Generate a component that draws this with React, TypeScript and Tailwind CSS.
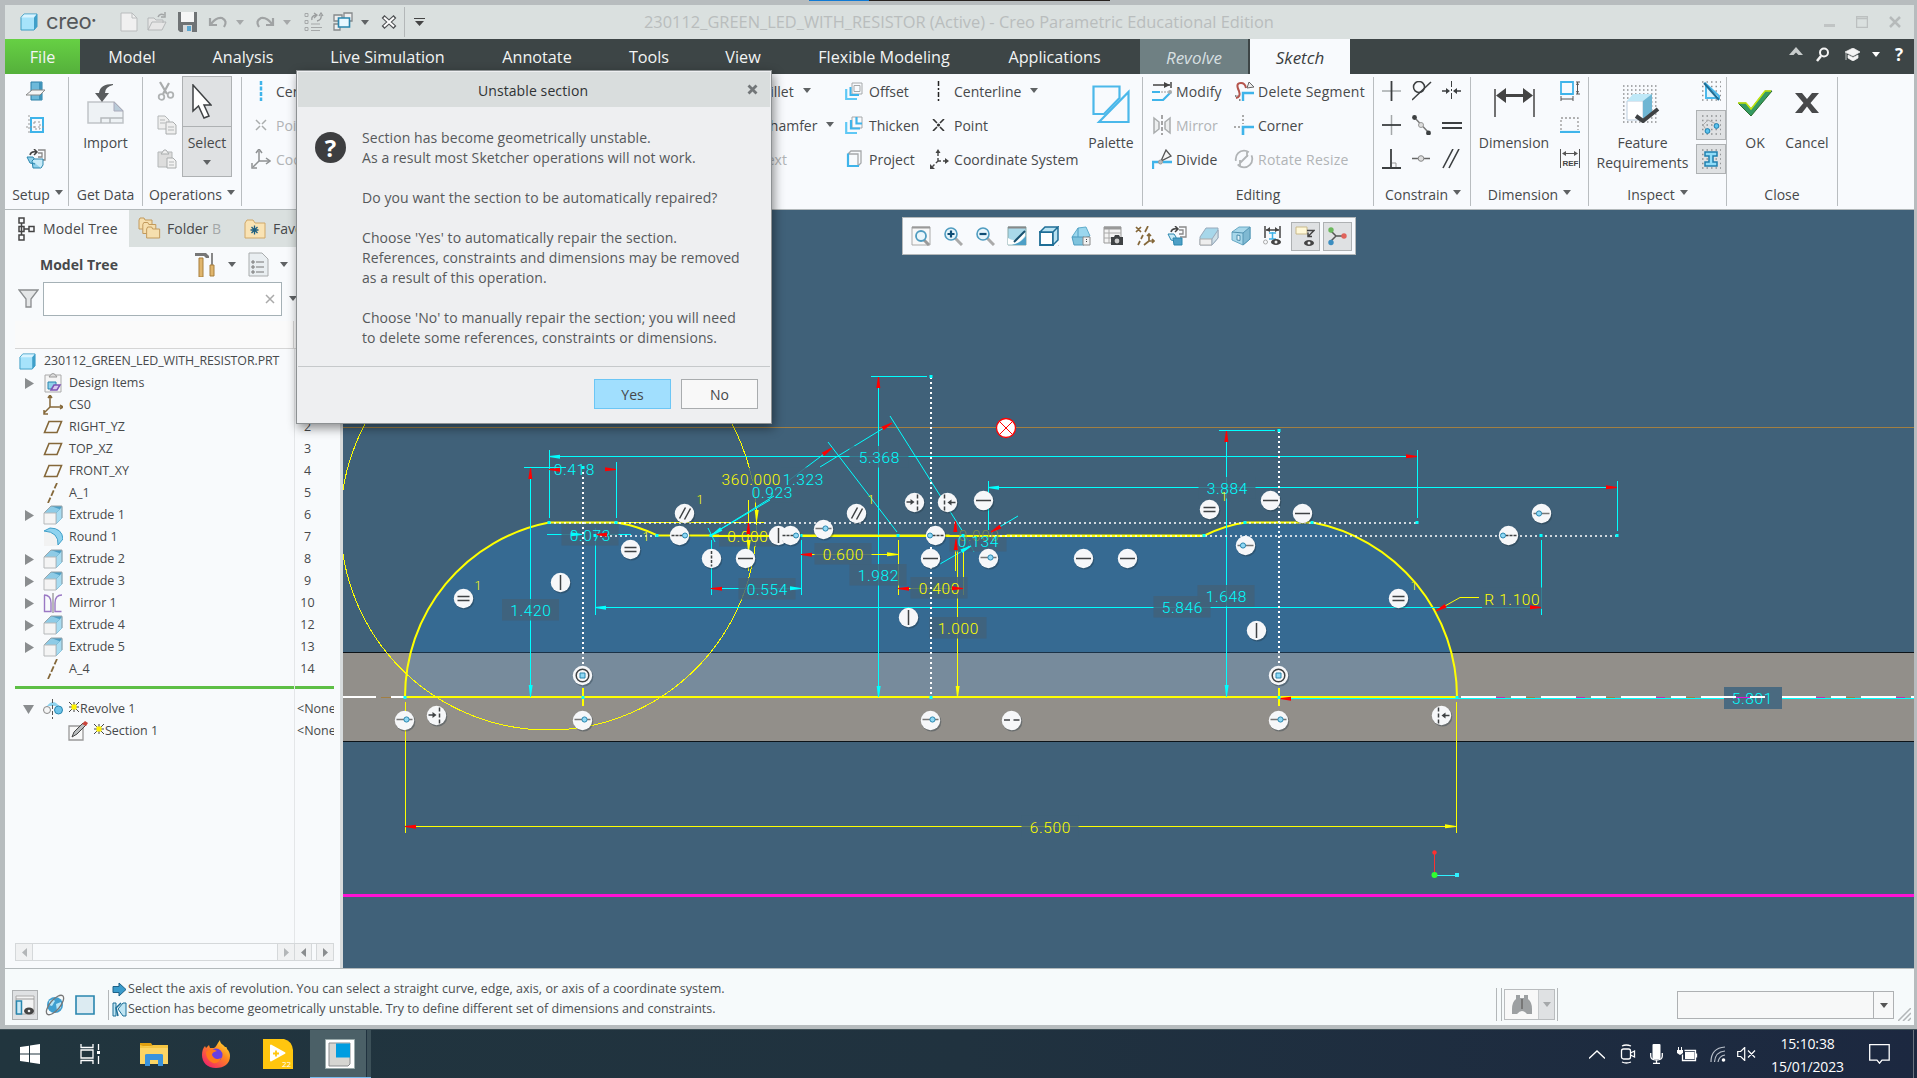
import React from "react";

type Kids = { children?: React.ReactNode };

/* ---------- shared helpers ---------- */

function Svg({ w, h, vb, className = "", children }: Kids & { w: number; h: number; vb?: string; className?: string }) {
  return (
    <svg width={w} height={h} viewBox={vb ?? `0 0 ${w} ${h}`} fill="none" className={`block shrink-0 ${className}`}>
      {children}
    </svg>
  );
}

function Caret({ color = "#5f6264", className = "" }: { color?: string; className?: string }) {
  return (
    <Svg w={8} h={5} className={className}>
      <path d="M0 0h8L4 5z" fill={color} />
    </Svg>
  );
}

function Cube({ s = 18 }: { s?: number }) {
  return (
    <Svg w={s} h={s} vb="0 0 18 18">
      <path d="M1 4.500L4 1h13v12.500L14 17H1z" fill="#a6e3fb" stroke="#3c9cc4" />
      <path d="M1.500 4.500L4 1.500h12.500L14 4.500z" fill="#d9f4ff" />
      <path d="M14 4.500L17 1v12.500L14 17z" fill="#3f9fc9" />
    </Svg>
  );
}

/* ---------- title bar ---------- */

function TitleBar() {
  return (
    <div className="flex h-[34px] items-center bg-[#dae0df]">
      <div className="flex w-[102px] items-center pl-[15px]">
        <Cube s={18} />
        <div className="ml-[8px] flex h-[24px] items-start text-[22px] leading-[22px] tracking-[-0.3px] text-[#55585a] [font-family:Inter,sans-serif]">
          creo<span className="text-[9px] leading-[20px]">•</span>
        </div>
      </div>
      <div className="flex w-[344px] items-center pl-[13px]">
        <Svg w={18} h={20}>
          <path d="M1 1h11l5 5v13H1z" fill="#f0f0f0" stroke="#b9bcbd" />
          <path d="M12 1v5h5" stroke="#b9bcbd" />
        </Svg>
        <Svg w={21} h={20} className="ml-[9px]">
          <path d="M1 18V6h6l2 2h7v3M1 18l4-8h14l-4 8z" fill="#e6e6e6" stroke="#b4b7b8" />
          <path d="M11 5q2-4 6-2M18 0v5h-4" stroke="#a2a5a6" strokeWidth="1.500" />
        </Svg>
        <Svg w={19} h={20} className="ml-[10px]">
          <path d="M0 0h19v20H2l-2-2z" fill="#6f7375" />
          <path d="M3 0h13v10H3z" fill="#f5f6f6" />
          <path d="M5 13h9v7H5z" fill="#d7dadb" />
          <path d="M9 14h4v5H9z" fill="#5ba7d0" />
        </Svg>
        <Svg w={20} h={16} className="ml-[11px]">
          <path d="M2 4v7h7M3 10Q8 3 14 4q6 3 2 9" stroke="#a0a3a4" strokeWidth="2.200" />
        </Svg>
        <Caret color="#a5a8a9" className="ml-[8px]" />
        <Svg w={20} h={16} className="ml-[11px]">
          <path d="M18 4v7h-7M17 10Q12 3 6 4q-6 3-2 9" stroke="#a0a3a4" strokeWidth="2.200" />
        </Svg>
        <Caret color="#a5a8a9" className="ml-[8px]" />
        <Svg w={20} h={20} className="ml-[13px]">
          <path d="M1 1.500h3v3H1zM1 8.500h3v3H1zM1 15.500h3v3H1zM7 12h9M7 15.500h11M7 18.500h9" stroke="#a5a8a9" />
          <path d="M8 8q-1-4 4-5M13 9q5-1 4-6M10 1l3 2-3 3M15 4l2-3 2 3" stroke="#9a9d9e" strokeWidth="1.300" />
        </Svg>
        <Svg w={20} h={20} className="ml-[9px]">
          <path d="M1 3h8v6H1zM11 1h8v8h-8zM1 12h6v6H1z" fill="#eee" stroke="#85898b" strokeWidth="1.300" />
          <path d="M5.500 6h11v9h-11z" fill="#e8f8ff" stroke="#2a86ae" strokeWidth="1.600" />
        </Svg>
        <Caret className="ml-[8px]" />
        <Svg w={16} h={14} className="ml-[12px]">
          <path d="M2 1.500L14 12.500M14 1.500L2 12.500" stroke="#505355" strokeWidth="4.200" />
          <path d="M3 2.500L13 11.500M13 2.500L3 11.500" stroke="#fff" strokeWidth="2" />
        </Svg>
        <div className="ml-[7px] h-[30px] w-px bg-[#b3b7b8]" />
        <Svg w={11} h={9} className="ml-[9px]">
          <path d="M0 .5h11" stroke="#444" />
          <path d="M1 3h9L5.500 8z" fill="#444" />
        </Svg>
      </div>
      <div className="flex-1 pl-[193px]">
        <span className="whitespace-nowrap text-[16.400px] text-[#b9bdbd]">
          230112_GREEN_LED_WITH_RESISTOR (Active) - Creo Parametric Educational Edition
        </span>
      </div>
      <div className="flex items-center gap-[21px] pr-[13px]">
        <div className="mt-[6px] h-[3px] w-[11px] bg-[#c0c4c4]" />
        <Svg w={12} h={12}>
          <path d="M.5.500h11v11H.5zM.5 2.500h11" stroke="#bcc0c0" strokeWidth="1.500" />
        </Svg>
        <Svg w={12} h={12}>
          <path d="M1 1l10 10M11 1L1 11" stroke="#b6baba" strokeWidth="2.500" />
        </Svg>
      </div>
    </div>
  );
}

/* ---------- ribbon tabs ---------- */

const tabs: [string, string][] = [
  ["Model", "w-[104px]"],
  ["Analysis", "w-[118px]"],
  ["Live Simulation", "w-[171px]"],
  ["Annotate", "w-[128px]"],
  ["Tools", "w-[96px]"],
  ["View", "w-[92px]"],
  ["Flexible Modeling", "w-[190px]"],
  ["Applications", "w-[151px]"],
];

function TabBar() {
  return (
    <div className="flex h-[35px] items-stretch bg-[#3d4546] text-[16.200px] leading-[37px] text-[#f2f4f4]">
      <div className="w-[75px] bg-gradient-to-b from-[#66d044] to-[#55b03b] text-center">File</div>
      {tabs.map(([t, w]) => (
        <div key={t} className={`${w} whitespace-nowrap text-center`}>
          {t}
        </div>
      ))}
      <div className="ml-[10px] w-[108px] bg-[#6f8083] text-center text-[17px] italic text-[#d6dfe0]">Revolve</div>
      <div className="ml-[2px] w-[100px] bg-[#f8fafd] text-center text-[17px] italic text-[#3b3e40]">Sketch</div>
      <div className="ml-auto flex items-center pr-[9px] pb-[4px]">
        <Svg w={14} h={9} className="mb-[6px]">
          <path d="M0 8l7-8 7 8z" fill="#c8cccc" />
          <path d="M4 8.500l3-3 3 3z" fill="#3d4546" />
        </Svg>
        <Svg w={14} h={15} className="ml-[13px]">
          <circle cx="8" cy="5.500" r="4" stroke="#f4f4f4" strokeWidth="2" />
          <path d="M5 9l-4 5" stroke="#f4f4f4" strokeWidth="2.500" />
        </Svg>
        <Svg w={15} h={13} className="ml-[15px]">
          <path d="M0 4l8-4 7 4-7 4zM3 7l5 2.500L13 7v3l-5 3-5-3zM1 5v7" fill="#f4f4f4" stroke="#f4f4f4" strokeWidth=".7" />
        </Svg>
        <Caret color="#fff" className="ml-[12px]" />
        <span className="ml-[15px] w-[10px] text-[17px] font-bold leading-none text-white">?</span>
      </div>
    </div>
  );
}

/* ---------- ribbon ---------- */

function Group({ w, label, caret, children, labelPad = "" }: Kids & { w: string; label: string; caret?: boolean; labelPad?: string }) {
  return (
    <div className={`flex shrink-0 ${w}`}>
      <div className="flex min-w-0 flex-1 flex-col">
        <div className="flex h-[104px]">{children}</div>
        <div className={`flex h-[31px] items-center justify-center gap-[5px] whitespace-nowrap pt-[1px] ${labelPad}`}>
          {label}
          {caret && <Caret className="mt-[-3px]" />}
        </div>
      </div>
      <div className="my-[3px] w-px bg-[#b9bdc0]" />
    </div>
  );
}

function Row({ icon, text, off, caret, iw = "w-[24px]", tw = "" }: { icon: React.ReactNode; text?: string; off?: boolean; caret?: boolean; iw?: string; tw?: string }) {
  return (
    <div className={`flex h-[34px] items-center whitespace-nowrap ${off ? "text-[#b1b4b6]" : ""}`}>
      <div className={iw}>{icon}</div>
      <span className={tw}>{text}</span>
      {caret && <Caret className="mb-[2px] ml-[9px]" />}
    </div>
  );
}

const BL = "#3fb4ea";

const icons = {
  setup1: (
    <Svg w={20} h={20}>
      <path d="M5 1h11v18H5z" fill="#6db9da" stroke="#2a7ea6" />
      <path d="M13 1h3v18h-3z" fill="#3f93ba" />
      <path d="M0 14l6-5h13l-5 5z" fill="#f5f5f5" stroke="#888" />
    </Svg>
  ),
  setup2: (
    <Svg w={20} h={20}>
      <path d="M5 3h12v14H5z" stroke={BL} strokeWidth="2" />
      <path d="M3 0v20M0 12h20M8 7h6v7H8z" stroke="#999" strokeDasharray="2 2" />
    </Svg>
  ),
  orient: (
    <Svg w={20} h={20}>
      <path d="M4 6q1-4 6-3M8 0l3 3-3 3" stroke="#444" strokeWidth="1.500" />
      <path d="M12 1h7v10h-6M12 4h4v4h-4" stroke="#888" strokeWidth="1.300" />
      <path d="M1 8h6l2 3v4l-5-1zM6 12h9v7H7z" fill="#8fd0ea" stroke="#2a86ae" />
      <path d="M6 12l2-2h9v6l-2 3" fill="#c9ebf8" stroke="#2a86ae" />
    </Svg>
  ),
  import: (
    <Svg w={38} h={42}>
      <path d="M1 19h26l9 9v12H1z" fill="#eef2f5" stroke="#c0c4c7" strokeWidth="1.500" />
      <path d="M27 19v9h9z" fill="#b9cbd8" stroke="#aab" />
      <path d="M14 40v-5h22M23 35v5" stroke="#b5b9bc" strokeWidth="1.500" />
      <path d="M26 1Q13 1 12 10H8l7 9 7-9h-4q0-6 8-8z" fill="#5a5d5f" />
    </Svg>
  ),
  cut: (
    <Svg w={18} h={20}>
      <path d="M3 1l7 12M12 2L6 13" stroke="#a9acad" strokeWidth="2.200" />
      <circle cx="4.500" cy="16" r="2.800" stroke="#b0b3b4" strokeWidth="1.800" />
      <circle cx="13.500" cy="14" r="2.800" stroke="#b0b3b4" strokeWidth="1.800" />
    </Svg>
  ),
  copy: (
    <Svg w={20} h={20}>
      <path d="M1 1h7l4 4v9H1z" fill="#eee" stroke="#b4b7b8" />
      <path d="M9 7h7l3 3v9H9z" fill="#eee" stroke="#a9acad" />
      <path d="M3 5h5M3 8h5M11 12h6M11 15h6" stroke="#b4b7b8" />
    </Svg>
  ),
  paste: (
    <Svg w={20} h={20}>
      <path d="M1 3h14v15H1z" fill="#ddd" stroke="#b4b7b8" />
      <path d="M4 5l3-4h2l3 4z" fill="#eee" stroke="#a9acad" />
      <path d="M10 9h6l3 3v7h-9z" fill="#f2f2f2" stroke="#a9acad" />
      <path d="M12 13h5M12 16h5" stroke="#b4b7b8" />
    </Svg>
  ),
  cursor: (
    <Svg w={20} h={36}>
      <path d="M1 1v26l5.500-5L12 34l5-2-5-11h7z" fill="#fff" stroke="#3f4244" strokeWidth="1.500" />
    </Svg>
  ),
  offset: (
    <Svg w={18} h={18}>
      <path d="M7 1h10v11H7zM9 3.500h6v6H9z" stroke="#a5a8aa" />
      <path d="M5.500 5v8H14" stroke={BL} strokeWidth="2" />
      <path d="M1.200 7v10H12" stroke="#5fc8f5" strokeWidth="2.200" />
    </Svg>
  ),
  thicken: (
    <Svg w={18} h={18}>
      <path d="M7 1h10v11H7z" stroke="#a5a8aa" />
      <path d="M6 4v8.500h9M11.500 1v6.500H17" stroke={BL} strokeWidth="2.200" />
      <path d="M1.200 6v11H12" stroke="#5fc8f5" strokeWidth="2.200" />
    </Svg>
  ),
  project: (
    <Svg w={18} h={18}>
      <path d="M3 4h10v11M3 4l3-3h10v12l-3 3" stroke="#a5a8aa" strokeWidth="1.300" />
      <path d="M3 3.500V16h11" stroke={BL} strokeWidth="2.200" />
    </Svg>
  ),
  cline: (
    <Svg w={18} h={20}>
      <path d="M8.500 0v20" stroke="#222" strokeWidth="1.500" strokeDasharray="5 2 2 2" />
    </Svg>
  ),
  clineBlue: (
    <Svg w={20} h={20}>
      <path d="M10 0v20" stroke={BL} strokeWidth="2.500" strokeDasharray="4 1.500" />
    </Svg>
  ),
  point: (
    <Svg w={18} h={12}>
      <path d="M3 0l4 4M14 0l-4 4M3 12l4-4M14 12l-4-4" stroke="#333" strokeWidth="1.600" />
      <circle cx="8.500" cy="6" r="1.600" fill="#333" />
    </Svg>
  ),
  pointOff: (
    <Svg w={20} h={12}>
      <path d="M5 1l4 4M15 1l-4 4M5 11l4-4M15 11l-4-4" stroke="#a9acad" strokeWidth="1.500" />
    </Svg>
  ),
  csys: (
    <Svg w={20} h={20}>
      <path d="M9 12V2M9 12h9M9 12l-7 7" stroke="#444" strokeWidth="1.400" strokeDasharray="3 2" />
      <path d="M6.500 4L9 0l2.500 4zM16 9l4 3-4 3zM1 15v5h5z" fill="#444" />
    </Svg>
  ),
  csysOff: (
    <Svg w={20} h={20}>
      <path d="M8 12V2M8 12h10M8 12l-6 6" stroke="#8e9193" strokeWidth="1.500" />
      <path d="M5 4l3-4 3 4M15 9l4 3-4 3M1 14v5h5" stroke="#8e9193" strokeWidth="1.500" />
    </Svg>
  ),
  palette: (
    <Svg w={38} h={38}>
      <path d="M1.500 1.500h26V13L12 29H1.500z" stroke="#4bb8ea" strokeWidth="2.200" />
      <path d="M7 37h29.500V7z" fill="#f8fafd" stroke="#4bb8ea" strokeWidth="2.200" />
    </Svg>
  ),
  modify: (
    <Svg w={21} h={19}>
      <path d="M1 3h17M19 0v6" stroke="#444" strokeWidth="1.500" />
      <path d="M12 0l6 3-6 3z" fill="#444" />
      <path d="M0 10h8M0 18h11l8-8" stroke={BL} strokeWidth="2.200" />
      <path d="M9 10h7" stroke="#999" strokeDasharray="2 1" />
      <circle cx="18" cy="10" r="2" fill="#aaa" />
    </Svg>
  ),
  mirror: (
    <Svg w={20} h={20}>
      <path d="M2 3l5 4v7l-5 4zM18 3l-5 4v7l5 4z" fill="#eceeef" stroke="#a9acad" strokeWidth="1.500" />
      <path d="M10 0v20" stroke="#888" strokeWidth="1.500" strokeDasharray="4 2" />
    </Svg>
  ),
  divide: (
    <Svg w={20} h={20}>
      <path d="M1 20v-7h6M11 13h9" stroke={BL} strokeWidth="2.300" />
      <path d="M9 12l5-11 5 6z" fill="#f4f4f4" stroke="#555" strokeWidth="1.300" />
      <circle cx="8.500" cy="13" r="2" fill="#bbb" stroke="#999" />
    </Svg>
  ),
  del: (
    <Svg w={21} h={20}>
      <path d="M2 17q5-1 3-7-4-8 2-8 4 0 5 5" stroke="#b4544c" strokeWidth="2" />
      <path d="M9 20v-8h11" stroke={BL} strokeWidth="2.400" />
      <path d="M13 7l2-6 5 5z" fill="#eee" stroke="#666" />
      <path d="M1 15h3M5 19h2" stroke="#888" strokeWidth="2" strokeDasharray="1.500 1" />
    </Svg>
  ),
  corner: (
    <Svg w={21} h={20}>
      <path d="M9 20v-8h11" stroke={BL} strokeWidth="2.600" />
      <path d="M9 0v9M0 12h6" stroke="#aaa" strokeWidth="2" strokeDasharray="2 2" />
    </Svg>
  ),
  rotate: (
    <Svg w={20} h={20}>
      <circle cx="10" cy="10" r="8.300" stroke="#b1b4b6" strokeWidth="1.800" strokeDasharray="20 4" />
      <path d="M6 14l8-8M13 3v5M6 17v-6" stroke="#b1b4b6" strokeWidth="1.800" />
    </Svg>
  ),
};

function Constraints() {
  const c = "#3c3f41";
  const cells: React.ReactNode[] = [
    <><path d="M0 10h19" stroke="#a5a8aa" strokeWidth="1.500" /><path d="M9.500 0v20" stroke={c} strokeWidth="1.800" /></>,
    <><circle cx="7" cy="6" r="5.500" stroke={c} strokeWidth="1.500" /><path d="M0 19L19 1" stroke={c} strokeWidth="1.500" /></>,
    <><path d="M9.500 0v20" stroke={c} strokeDasharray="6 2 2 2" /><path d="M0 10h6M19 10h-6" stroke={c} strokeWidth="1.500" /><path d="M4 7l4 3-4 3zM15 7l-4 3 4 3z" fill={c} /></>,
    <><path d="M9.500 0v20" stroke="#a5a8aa" strokeWidth="1.500" /><path d="M0 10h19" stroke={c} strokeWidth="1.800" /></>,
    <><path d="M2 2l15 16" stroke="#777" strokeWidth="1.500" /><circle cx="2.500" cy="2.500" r="2.400" fill={c} /><circle cx="16.500" cy="18" r="2.400" fill={c} /><circle cx="9" cy="10" r="2.500" fill="#ddd" stroke="#999" /></>,
    <><path d="M0 8h20M0 13h20" stroke={c} strokeWidth="1.800" /></>,
    <><path d="M0 19h19M9 0v19" stroke={c} strokeWidth="1.800" /><path d="M10 14h4v4" stroke="#999" /></>,
    <><path d="M0 9.500h18" stroke="#666" strokeWidth="1.500" /><circle cx="9" cy="9.500" r="2.800" fill="#ddd" stroke="#888" /></>,
    <><path d="M1 19L11 0M7 19L17 0" stroke={c} strokeWidth="1.600" /></>,
  ];
  return (
    <div className="grid h-[102px] grid-cols-[30px_30px_20px] items-center pl-[8px]">
      {cells.map((k, i) => (
        <Svg key={i} w={20} h={20}>{k}</Svg>
      ))}
    </div>
  );
}

function BigButton({ icon, children, w }: Kids & { icon: React.ReactNode; w: string }) {
  return (
    <div className={`flex flex-col items-center pt-px ${w}`}>
      <div className="flex h-[56px] items-center">{icon}</div>
      <div className="whitespace-nowrap pt-[2px] text-center leading-[20px]">{children}</div>
    </div>
  );
}

const dots = (x0: number, y0: number, x1: number, y1: number, step: number) => {
  const out: React.ReactNode[] = [];
  for (let y = y0; y <= y1; y += step) out.push(<path key={y} d={`M${x0} ${y}H${x1}`} stroke="#8e9193" strokeDasharray={`1.500 ${step - 1.5}`} strokeWidth="1.500" />);
  return out;
};

function Ribbon() {
  return (
    <div className="flex h-[136px] overflow-hidden border-b border-[#b3b9bb] bg-[#f8fafd] text-[14px] text-[#47494b]">
      <Group w="w-[64px]" label="Setup" caret labelPad="pl-[2px]">
        <div className="pl-[21px]">
          <Row icon={icons.setup1} />
          <Row icon={icons.setup2} />
          <Row icon={icons.orient} />
        </div>
      </Group>
      <Group w="w-[74px]" label="Get Data">
        <BigButton w="w-[73px]" icon={<div className="pt-[1px]">{icons.import}</div>}>Import</BigButton>
      </Group>
      <Group w="w-[99px]" label="Operations" caret>
        <div className="pl-[14px]">
          <Row icon={icons.cut} iw="w-[25px]" />
          <Row icon={icons.copy} iw="w-[25px]" />
          <Row icon={icons.paste} iw="w-[25px]" />
        </div>
        <div className="mt-[2px] flex h-[101px] w-[50px] flex-col border border-[#aeb1b3] bg-[#dfe1e3]">
          <div className="flex h-[50px] items-center justify-center border-b border-[#aeb1b3] pr-[10px]">{icons.cursor}</div>
          <div className="flex flex-1 flex-col items-center pt-[6px] leading-[20px]">
            Select
            <Caret className="mt-[7px]" />
          </div>
        </div>
      </Group>
      <Group w="w-[901px]" label="Sketching" labelPad="pr-[98px]">
        <div className="w-[494px] pl-[9px]">
          <Row icon={icons.clineBlue} text="Centerline" iw="w-[25px]" />
          <Row icon={icons.pointOff} text="Point" off iw="w-[25px]" />
          <Row icon={icons.csysOff} text="Coordinate System" off iw="w-[25px]" />
        </div>
        <div className="w-[109px] pl-[23px]">
          <Row icon={null} text="Fillet" caret iw="w-0" tw="pl-[4px]" />
          <Row icon={null} text="Chamfer" caret iw="w-0" tw="pl-[2px]" />
          <Row icon={null} text="Text" off iw="w-0" />
        </div>
        <div className="w-[84px]">
          <Row icon={icons.offset} text="Offset" />
          <Row icon={icons.thicken} text="Thicken" />
          <Row icon={icons.project} text="Project" />
        </div>
        <div className="w-[151px]">
          <Row icon={icons.cline} text="Centerline" caret iw="w-[25px] pl-[1px]" />
          <Row icon={icons.point} text="Point" iw="w-[25px] pl-[1px]" />
          <Row icon={icons.csys} text="Coordinate System" iw="w-[25px]" tw="tracking-[0.06px]" />
        </div>
        <BigButton w="w-[62px]" icon={<div className="pt-[2px]">{icons.palette}</div>}>Palette</BigButton>
      </Group>
      <Group w="w-[231px]" label="Editing">
        <div className="w-[82px] pl-[9px]">
          <Row icon={icons.modify} text="Modify" iw="w-[24px]" tw="tracking-[0.15px]" />
          <Row icon={icons.mirror} text="Mirror" off iw="w-[24px]" />
          <Row icon={icons.divide} text="Divide" iw="w-[24px]" tw="tracking-[0.15px]" />
        </div>
        <div className="pl-[9px]">
          <Row icon={icons.del} text="Delete Segment" iw="w-[24px]" tw="tracking-[0.25px]" />
          <Row icon={icons.corner} text="Corner" iw="w-[24px]" />
          <Row icon={icons.rotate} text="Rotate Resize" off iw="w-[24px]" tw="tracking-[0.25px]" />
        </div>
      </Group>
      <Group w="w-[97px]" label="Constrain" caret labelPad="pl-[2px]">
        <Constraints />
      </Group>
      <Group w="w-[118px]" label="Dimension" caret>
        <BigButton
          w="w-[86px]"
          icon={
            <Svg w={41} h={30} className="mt-[-3px]">
              <path d="M1 2v28M40 2v28" stroke="#444" strokeWidth="1.500" />
              <path d="M8 8.500h25" stroke="#444" strokeWidth="3" />
              <path d="M2 8.500L12 1v15zM39 8.500L29 1v15z" fill="#444" />
            </Svg>
          }
        >
          Dimension
        </BigButton>
        <div className="pl-[3px]">
          <Row icon={<Svg w={20} h={20}><path d="M1 1h12v12H1z" stroke={BL} strokeWidth="1.800" /><path d="M17.500 1v12M16 1h4M16 13h4M1 18h12M1 15v5M13 15v5" stroke="#555" /><path d="M16 4l1.500-3L19 4zM16 10l1.500 3 1.500-3z" fill="#555" /></Svg>} />
          <Row icon={<Svg w={20} h={16}><path d="M1 13V1h17v12" stroke="#999" strokeWidth="1.300" strokeDasharray="2 2" /><path d="M0 15h20" stroke={BL} strokeWidth="2.200" /></Svg>} />
          <Row icon={<Svg w={20} h={20}><path d="M.5 0v19M19.500 0v19M3 4.500h14" stroke="#555" /><path d="M2 4.500l4-2.500v5zM18 4.500L14 2v5z" fill="#555" /><text x="2.500" y="17" fontSize="8" fontWeight="700" fill="#444" fontFamily="Liberation Sans">REF</text></Svg>} />
        </div>
      </Group>
      <Group w="w-[138px]" label="Inspect" caret>
        <BigButton
          w="w-[107px]"
          icon={
            <Svg w={38} h={38} className="ml-[-4px] mt-[1px]">
              {dots(1, 1, 37, 37, 4)}
              <path d="M5 16h16v19H5z" fill="#fff" stroke="#bcd" />
              <path d="M5 16l6-7h19l-7 7z" fill="#bfe8f7" />
              <path d="M21 16l9-7v18l-9 8z" fill="#6fb6d3" />
              <path d="M14 31l7 5 15-12" stroke="#3f4244" strokeWidth="4" />
            </Svg>
          }
        >
          Feature
          <br />
          Requirements
        </BigButton>
        <div className="flex flex-col pt-[2px]">
          {[0, 1, 2].map((i) => (
            <div key={i} className={i ? "mb-[4px] flex h-[30px] w-[26px] items-center justify-center border border-[#aeb1b3] bg-[#dfe1e3] px-[14px]" : "mb-[4px] flex h-[30px] w-[30px] items-center justify-center"}>
              <Svg w={20} h={20}>
                {dots(1, 1, 20, 20, 4.5)}
                {i === 0 && <><path d="M5 3v14h13V15z" fill="#dff3fb" stroke="#4bb8ea" strokeWidth="2" /><path d="M3 2l15 17" stroke="#1f6d94" strokeWidth="2" /></>}
                {i === 1 && <><path d="M2 10l5-5 8 4M2 10l4 6" stroke="#aaa" /><circle cx="15.500" cy="11" r="2.400" fill="#5cc3ee" stroke="#1f7fae" /><circle cx="6.500" cy="16" r="2.400" fill="#5cc3ee" stroke="#1f7fae" /></>}
                {i === 2 && <path d="M4 3h12v4h-4v6h4v4H4v-4h4V7H4z" fill="#8fdcf8" stroke="#1f7fae" strokeWidth="1.500" />}
              </Svg>
            </div>
          ))}
        </div>
      </Group>
      <Group w="w-[111px]" label="Close">
        <BigButton
          w="w-[56px]"
          icon={
            <Svg w={36} h={27}>
              <path d="M1 13h8l5 6L28 1h7L14 26z" fill="#359a62" stroke="#2a6e2d" />
              <path d="M1 13h8l5 6L28 1h6" stroke="#c3e60f" strokeWidth="1.500" />
            </Svg>
          }
        >
          OK
        </BigButton>
        <BigButton w="w-[48px]" icon={<Svg w={24} h={20}><path d="M0 0h7l5 6 5-6h7l-8.500 10L24 20h-7l-5-6.500L7 20H0l8.500-10z" fill="#48494b" /></Svg>}>
          Cancel
        </BigButton>
      </Group>
    </div>
  );
}

/* ---------- model tree ---------- */

const brown = "#85683a";
const treeIcons: Record<string, React.ReactNode> = {
  design: <><path d="M2 2h16v17H2z" fill="#f5f5f5" stroke="#aaa" /><path d="M6 4q4-7 8 0z" fill="#ddd" stroke="#999" /><path d="M5 9h8v7H5z" fill="#8fd0ea" stroke="#2a86ae" /><path d="M8 17l3-5h6l-3 5z" fill="#d8c8ee" stroke="#7d54b4" strokeWidth="1.500" /></>,
  csys: <path d="M7 12V1M7 12h12M7 12l-6 6M5 3l2-3 2 3M17 10l3 2-3 2M1 15v4h4" stroke={brown} strokeWidth="1.500" />,
  plane: <path d="M6 4.500h12.500L14 15.500H1.500z" stroke={brown} strokeWidth="1.600" />,
  axis: <path d="M14 0L5 20" stroke={brown} strokeWidth="1.800" strokeDasharray="6 2" />,
  extrude: <><path d="M1 8l7-7h11v11l-6 7V8z" fill="#8ecbe6" /><path d="M8 1h11v12l-3-3V4z" fill="#4d9fc6" /><path d="M13 8l6-6v11l-6 6z" fill="#a8dcf1" stroke="#6fb3d0" strokeWidth=".7" /><path d="M1 8l7-7h11M19 1v12" stroke="#9aa5aa" /><path d="M1 8h12v11H1z" fill="#f4f4f4" stroke="#b5b8ba" /></>,
  round: <><path d="M1 4q16-1 14 15H1z" fill="#f2f2f2" /><path d="M1 4l6-3q12 0 13 11l-5 6Q16 5 1 4z" fill="#8fd3ef" stroke="#3f9fc9" /></>,
  mirror: <><path d="M1 2q7 0 7 8v8.500H1.500V2M19 2q-7 0-7 8v8.500h6.500" stroke="#9a78c4" strokeWidth="1.400" /><path d="M10 0v20" stroke="#777" /></>,
  revolve: <><path d="M4 7q6-8 12 0z" fill="#8fd3ef" /><circle cx="4" cy="11" r="3.500" fill="#f5f5f5" stroke="#888" /><circle cx="15.500" cy="11" r="4" fill="#6cc4ea" stroke="#2a86ae" /><path d="M9.500 0v20" stroke="#555" strokeDasharray="4 2" /></>,
  sketch: <><path d="M1 5h14v14H1z" fill="#f8f8f8" stroke="#999" strokeWidth="1.300" /><path d="M4 16l2-5L15 2l3 2-9 9z" fill="#b9bcbd" stroke="#444" /><path d="M14 3l3-3 3 2-2 3z" fill="#c9453c" /></>,
};

const rows: [string, string, string, boolean][] = [
  ["design", "Design Items", "", true],
  ["csys", "CS0", "1", false],
  ["plane", "RIGHT_YZ", "2", false],
  ["plane", "TOP_XZ", "3", false],
  ["plane", "FRONT_XY", "4", false],
  ["axis", "A_1", "5", false],
  ["extrude", "Extrude 1", "6", true],
  ["round", "Round 1", "7", false],
  ["extrude", "Extrude 2", "8", true],
  ["extrude", "Extrude 3", "9", true],
  ["mirror", "Mirror 1", "10", true],
  ["extrude", "Extrude 4", "12", true],
  ["extrude", "Extrude 5", "13", true],
  ["axis", "A_4", "14", false],
];

function NewMark() {
  return (
    <Svg w={10} h={10}>
      <path d="M0 0l3 3M5 0v3M10 0L7 3M0 10l3-3M5 10V7M10 10L7 7M0 5h3M10 5H7" stroke="#444" />
      <path d="M2.500 2.500h5v5h-5z" fill="#fff200" />
    </Svg>
  );
}

function ModelTree() {
  return (
    <div className="flex w-[338px] shrink-0 flex-col border-r-[3px] border-[#d7dbdc] bg-[#f8fafc] text-[12.500px] text-[#47494b]">
      <div className="flex h-[37px] bg-[#dae0df] text-[14px] leading-[38px]">
        <div className="flex w-[124px] items-center bg-[#f8fafc] pl-[13px]">
          <Svg w={17} h={24}>
            <path d="M1 1h5v5H1zM1 9.500h5v5H1zM1 18h5v5H1zM11 9.500h5v5h-5zM3.500 6v12M6 12h5" stroke="#444" strokeWidth="1.500" />
          </Svg>
          <span className="ml-[8px] whitespace-nowrap tracking-[0.1px]">Model Tree</span>
        </div>
        <div className="flex w-[106px] items-center overflow-hidden pl-[9px]">
          <Svg w={24} h={24}>
            {[0, 4.5, 9].map((d) => (
              <path key={d} d={`M${1 + d * 0.85} ${12 + d}V${3 + d}l1-2h4l1 2h7v9z`} fill="#f6dfae" stroke="#c29a5c" />
            ))}
          </Svg>
          <span className="ml-[5px] whitespace-nowrap">Folder <span className="text-[#a3a7a7]">B</span></span>
        </div>
        <div className="flex w-[92px] items-center overflow-hidden pl-[9px]">
          <Svg w={22} h={20}>
            <path d="M1 19V4l2-3h6l2 3h10v15z" fill="#f9e3b4" stroke="#d0a868" />
            <path d="M10.500 6.500v9M6.500 11h8M7.500 8l6 6M13.500 8l-6 6" stroke="#1f5f80" strokeWidth="1.300" />
          </Svg>
          <span className="ml-[7px] whitespace-nowrap">Favorites</span>
        </div>
      </div>
      <div className="flex h-[35px] items-center pl-[35px]">
        <span className="w-[154px] text-[14px] font-bold">Model Tree</span>
        <Svg w={22} h={25}>
          <path d="M1 1h11l3 3v2h-3l-2-2H1z" fill="#777" />
          <path d="M5 6h4v19H5z" fill="#e0b56c" stroke="#a77f3c" />
          <path d="M18 1v12" stroke="#888" strokeWidth="2" />
          <path d="M16 13h4v11h-4z" fill="#e0b56c" stroke="#a77f3c" />
        </Svg>
        <Caret className="ml-[12px]" />
        <Svg w={21} h={25} className="ml-[12px]">
          <path d="M1 1h13l6 6v17H1z" fill="#e9eef1" stroke="#a9acad" />
          <path d="M8 10h8M8 15h8M8 20h8" stroke="#777" />
          <path d="M4 9h2v2H4zM4 14h2v2H4zM4 19h2v2H4z" stroke="#777" />
        </Svg>
        <Caret className="ml-[11px]" />
      </div>
      <div className="flex h-[36px] items-start pl-[13px]">
        <Svg w={21} h={19} className="mt-[7px]">
          <path d="M1 1h19l-7 9v8H8v-8z" fill="#e4e6e7" stroke="#8a8d8f" strokeWidth="1.300" />
        </Svg>
        <div className="ml-[4px] flex h-[34px] w-[239px] items-center justify-end border border-[#a5b1b6] bg-white pr-[6px]">
          <Svg w={10} h={10}><path d="M1 1l8 8M9 1L1 9" stroke="#aaa" strokeWidth="1.500" /></Svg>
        </div>
        <Caret className="ml-[7px] mt-[14px]" />
      </div>
      <div className="ml-[10px] mt-[3px] flex h-[28px] w-[325px] border-b border-[#d5d5d5] bg-[#fafafa]">
        <div className="w-[279px] border-r border-[#d5d5d5]" />
      </div>
      <div className="ml-[10px] flex w-[319px] flex-1">
        <div className="w-[280px] shrink-0 border-r border-[#e4e6e8]">
          <div className="flex h-[23px] items-center pl-[4px] pt-[1px]">
            <Cube s={17} />
            <span className="ml-[8px] whitespace-nowrap text-[12.400px] tracking-[-0.08px]">230112_GREEN_LED_WITH_RESISTOR.PRT</span>
          </div>
          {rows.map(([ic, t, , ex]) => (
            <div key={t} className="flex h-[22px] items-center pl-[10px]">
              <div className="w-[18px]">{ex && <Svg w={9} h={11}><path d="M0 0l9 5.500L0 11z" fill="#8a8d8f" /></Svg>}</div>
              <Svg w={20} h={20}>{treeIcons[ic]}</Svg>
              <span className="ml-[6px] whitespace-nowrap">{t}</span>
            </div>
          ))}
          <div className="mt-[6px] h-[3px] w-[279px] bg-[#5ebf45]" />
          <div className="mt-[9px] flex h-[22px] items-center pl-[8px]">
            <Svg w={11} h={9} className="mr-[9px]"><path d="M0 0h11L5.500 9z" fill="#8a8d8f" /></Svg>
            <Svg w={20} h={20}>{treeIcons.revolve}</Svg>
            <div className="mb-[5px] ml-[6px]"><NewMark /></div>
            <span className="ml-[1px]">Revolve 1</span>
          </div>
          <div className="flex h-[22px] items-center pl-[53px]">
            <Svg w={20} h={20}>{treeIcons.sketch}</Svg>
            <div className="mb-[5px] ml-[6px]"><NewMark /></div>
            <span className="ml-[1px]">Section 1</span>
          </div>
        </div>
        <div className="flex w-[39px] flex-col overflow-hidden pt-[23px]">
          {rows.map(([, t, n]) => (
            <div key={t} className="h-[22px] w-[25px] text-center leading-[21px]">{n}</div>
          ))}
          <div className="mt-[6px] h-[3px] bg-[#5ebf45]" />
          <div className="mt-[9px] h-[22px] pl-[2px] leading-[22px]">&lt;None</div>
          <div className="h-[22px] pl-[2px] leading-[22px]">&lt;None</div>
        </div>
      </div>
      <div className="mb-[7px] ml-[10px] flex h-[18px]">
        <div className="flex w-[280px] justify-between border border-[#d5d8da]">
          <ScrollArrow left />
          <ScrollArrow />
        </div>
        <div className="flex w-[39px] justify-between border border-l-0 border-[#d5d8da]">
          <ScrollArrow left dark />
          <ScrollArrow dark />
        </div>
      </div>
    </div>
  );
}

function ScrollArrow({ left, dark }: { left?: boolean; dark?: boolean }) {
  return (
    <div className={`flex w-[17px] items-center justify-center bg-[#f0f1f2] ${left ? "border-r" : "border-l"} border-[#d5d8da]`}>
      <Svg w={5} h={9}><path d={left ? "M5 0v9L0 4.500z" : "M0 0v9l5-4.500z"} fill={dark ? "#8a8d8f" : "#b3b6b8"} /></Svg>
    </div>
  );
}

/* ---------- sketch canvas ---------- */

const C = "#00ffff";
const Y = "#ffff00";
const R = "#ff0000";

type Dim = { x: number; y: number; t: string; c?: string; box?: boolean; w?: number };

const dims: Dim[] = [
  { x: 879, y: 457, t: "5.368", w: 59 },
  { x: 574, y: 469, t: "0.418", w: 0 },
  { x: 530.5, y: 610, t: "1.420", box: true },
  { x: 590, y: 535, t: "0.073", box: true },
  { x: 751, y: 479, t: "360.000", c: Y, w: 56 },
  { x: 803, y: 478.5, t: "1.323", w: 44 },
  { x: 772, y: 492, t: "0.923", w: 46 },
  { x: 747.5, y: 536, t: "0.000", c: Y, box: true },
  { x: 767, y: 589, t: "0.554", box: true },
  { x: 843, y: 554, t: "0.600", c: Y, box: true },
  { x: 878, y: 575, t: "1.982", box: true },
  { x: 939, y: 588, t: "0.400", c: Y, box: true },
  { x: 958, y: 628, t: "1.000", c: Y, box: true },
  { x: 978, y: 541, t: "0.134", box: true },
  { x: 1227, y: 488, t: "3.884" },
  { x: 1226, y: 596, t: "1.648", box: true },
  { x: 1182, y: 607, t: "5.846", box: true },
  { x: 1050, y: 826.5, t: "6.500", c: Y },
  { x: 1512, y: 598.5, t: "R 1.100", c: Y, w: 60 },
];

function DimText({ x, y, t, c = C }: Dim) {
  return (
    <text x={x + 0.3} y={y + 6} fill={c} fontSize="15.500" fontWeight="300" letterSpacing=".6" textAnchor="middle" fontFamily="Roboto, sans-serif">
      {t}
    </text>
  );
}

function Arrow({ x, y, a = 0, c = R }: { x: number; y: number; a?: number; c?: string }) {
  return (
    <g transform={`translate(${x} ${y}) rotate(${a})`}>
      <path d="M0-.5L-11-2.200V1.800L0 .5z" fill={c} />
    </g>
  );
}

type Kind = "eq" | "v" | "h" | "par" | "dp" | "pd" | "vd" | "lp" | "pl" | "symR" | "symL" | "con" | "hh";

const marks: [Kind, number, number][] = [
  ["eq", 464, 599], ["v", 561, 583], ["eq", 631, 550], ["par", 685, 514], ["dp", 680, 536], ["vd", 712, 559], ["h", 746, 559],
  ["v", 779, 536], ["dp", 791, 536], ["lp", 824, 530], ["par", 857, 514], ["symR", 915, 503], ["symL", 948, 503], ["h", 984, 501],
  ["pd", 936, 536], ["h", 931, 559], ["lp", 989, 559], ["h", 1084, 559], ["h", 1128, 559], ["v", 909, 618], ["eq", 1210, 510],
  ["h", 1271, 501], ["h", 1303, 514], ["pl", 1246, 546], ["eq", 1399, 599], ["v", 1257, 631], ["pd", 1509, 536], ["pl", 1542, 514],
  ["con", 583, 676], ["con", 1279, 676], ["lp", 405, 721], ["symR", 437, 716], ["lp", 583, 721], ["lp", 931, 721], ["hh", 1012, 721],
  ["lp", 1279, 721], ["symL", 1442, 716],
];

const glyph: Record<Kind, React.ReactNode> = {
  eq: <path d="M-6-2H6M-6 2H6" />,
  v: <path d="M0-7.500V7.500" />,
  h: <path d="M-7.500 0H7.500" />,
  par: <path d="M-5 5L1-6M0 6L6-5" />,
  dp: <><path d="M-8 0H3" strokeDasharray="3 1" /><circle cx="5.500" cy="0" r="2.500" fill="#8fd8f5" stroke="#2a86ae" strokeWidth="1" /></>,
  pd: <><path d="M8 0H-3" strokeDasharray="3 1" /><circle cx="-5.500" cy="0" r="2.500" fill="#8fd8f5" stroke="#2a86ae" strokeWidth="1" /></>,
  vd: <path d="M0-7.500V8" strokeDasharray="3 1.500" />,
  lp: <><path d="M-8-1H8" stroke="#777" /><circle cx="2" cy="-1" r="2.600" fill="#8fd8f5" stroke="#2a86ae" strokeWidth="1" /></>,
  pl: <><path d="M-8 0H8" stroke="#777" /><circle cx="-2.500" cy="0" r="2.600" fill="#8fd8f5" stroke="#2a86ae" strokeWidth="1" /></>,
  symR: <><path d="M3-8V8" strokeDasharray="4 2" /><path d="M-8-.5h6" /><path d="M-4-3.500L0-.5l-4 3z" fill="#3f4244" stroke="none" /></>,
  symL: <><path d="M-3-8V8" strokeDasharray="4 2" /><path d="M8 0H2" /><path d="M4-3L0 0l4 3z" fill="#3f4244" stroke="none" /></>,
  con: <><circle r="6.300" fill="none" /><path d="M-2.500-2.500h5v5h-5z" fill="#8fd8f5" stroke="#2a86ae" strokeWidth="1" /></>,
  hh: <path d="M-7.500-.5h6M2-.5h6" />,
};

const profile = "M405 697A178 178 0 0 1 549 522.500H616.500Q638 526 657.500 535.500H1204.500Q1226 525 1245.500 522.500H1313A178 178 0 0 1 1457 697Z";

function Canvas() {
  return (
    <svg width="1571" height="758" viewBox="343 210 1571 758" className="block" fill="none">
      <defs>
        <clipPath id="upper"><rect x="343" y="210" width="1571" height="442" /></clipPath>
        <clipPath id="lower"><rect x="343" y="652" width="1571" height="46" /></clipPath>
      </defs>
      <rect x="343" y="210" width="1571" height="758" fill="#406179" />
      <path d="M343 427.500H1914" stroke="#a27f43" />
      <rect x="343" y="652" width="1571" height="89" fill="#928f8a" />
      <path d={profile} fill="#366a92" clipPath="url(#upper)" />
      <path d={profile} fill="#778b9c" clipPath="url(#lower)" />
      <path d="M343 652.500H1914M343 741.500H1914" stroke="#0c1318" />
      <path d="M411 652.500H1451" stroke="#1b3247" />
      <path d="M343 895.500H1914" stroke="#ff12d5" strokeWidth="3" />

      <circle cx="548.500" cy="522" r="208" stroke={Y} shapeRendering="crispEdges" />

      {/* axis of revolution */}
      <path d="M343 697H376M391 697H405" stroke="#fff" strokeWidth="2" />
      <path d="M381 697.500h10" stroke="#a27f43" />
      <path d="M1280 698.500H1914" stroke={C} />
      <path d="M1461 697H1914" stroke="#fff" strokeWidth="2" strokeDasharray="35 15 15 15" />
      <path d="M1496 697.500H1914" stroke="#c22fb0" strokeDasharray="9 71" />
      <path d="M1526 697.500H1914" stroke="#a27f43" strokeDasharray="9 71" />

      <path d={profile} stroke={Y} strokeWidth="2" />

      <path d="M583 688V706M1279 688V706" stroke={Y} strokeWidth="2" strokeDasharray="8 2" />

      {/* dimension lines */}
      <g stroke={C} shapeRendering="crispEdges">
        <path d="M878.500 377V697M871 376.500H927" />
        <path d="M549.500 456.500H1417.500M549.500 450V518M1417.500 450V518" />
        <path d="M616.500 462V518" />
        <path d="M530.500 467V697M524 467.500H566" />
        <path d="M547 534.500H583M596 534.500H631M595.500 528V615M595.500 607.500H1541.500M1541.500 540V615" />
        <path d="M711.500 540V595M801.500 540V595M711.500 588.500H801.500" />
        <path d="M988.500 487.500H1617.500M988.500 481V530M1617.500 481V531" />
        <path d="M1226.500 430V697M1219 430.500H1275" />
      </g>
      <path d="M788 481L832 448M828 442L897 532M820 467L892 423M890 416L963 532M940 564L971 546M966 536L974 552M1018 516L991 532M708 528L715 542" stroke={C} />
      <g stroke={Y} shapeRendering="crispEdges">
        <path d="M616 522.500H764" />
        <path d="M801 554.500H898M898.500 540V595M963.500 545V595M898.500 588.500H963.500" />
        <path d="M957.500 547V697M955.500 547V571M748.500 500V571" />
        <path d="M405.500 702V833M1456.500 702V833M405 826.500H1457" />
      </g>
      <path d="M1436 611L1460 597.500H1479" stroke={Y} />

      {dims.map(({ x, y, t, box, w = 57 }) => (
        <rect key={t + x} x={x - w / 2} y={y - 11} width={w} height="21.500" fill={box ? "#41617a" : "#406179"} fillOpacity={box ? 0.85 : 0.8} />
      ))}
      <path d="M711 535L774 496M711 535L770 500" stroke={C} />
      <path d="M711 536H1204" stroke={Y} strokeWidth="2" />

      {/* construction references */}
      <g stroke="#fff" strokeWidth="2" strokeDasharray="2 3">
        <path d="M583 467V668M931 377V697M1279 431V668" />
        <path d="M549 523H1417M600 536H657M990 536H1617" strokeWidth="1.500" />
      </g>
      <text x="979" y="541" fill="#7d8a52" fontSize="15.500" fontWeight="300" letterSpacing=".6" textAnchor="middle" fontFamily="Roboto, sans-serif">0.000</text>
      {dims.map((d) => (
        <DimText key={d.t + d.x} {...d} />
      ))}

      <rect x="1724" y="687" width="58" height="22" fill="#4a6a80" />
      <DimText x={1752} y={698} t="5.801" />
      <path d="M1724 697H1736M1750 697H1765" stroke="#fff" strokeWidth="2" />
      <path d="M1736 697.500H1750" stroke="#e612d5" />

      {([[478, 590], [646, 541], [700, 504], [871, 504], [1224, 501], [1414, 590]] as const).map(([x, y]) => (
        <text key={x} x={x} y={y} fill={Y} fontSize="12.500" fontWeight="300" textAnchor="middle" fontFamily="Roboto, sans-serif">1</text>
      ))}

      <Arrow x={549} y={456.500} a={180} c={C} />
      <Arrow x={1417} y={456.500} />
      <Arrow x={549} y={469.500} a={180} />
      <Arrow x={616} y={469.500} />
      <Arrow x={530.500} y={468} a={-90} />
      <Arrow x={530.500} y={696} a={90} c={C} />
      <Arrow x={582} y={534.500} c={C} />
      <Arrow x={596} y={534.500} a={180} />
      <Arrow x={595} y={607.500} a={180} c={C} />
      <Arrow x={1541} y={607.500} />
      <Arrow x={711} y={588.500} a={180} />
      <Arrow x={801} y={588.500} c={C} />
      <Arrow x={801} y={554.500} a={180} />
      <Arrow x={898} y={554.500} c={Y} />
      <Arrow x={898} y={588.500} a={180} />
      <Arrow x={963} y={588.500} />
      <Arrow x={957.500} y={697} a={90} c={Y} />
      <Arrow x={878.500} y={377} a={-90} />
      <Arrow x={878.500} y={697} a={90} c={C} />
      <Arrow x={988} y={487.500} a={180} c={C} />
      <Arrow x={1617} y={487.500} />
      <Arrow x={1226.500} y={431} a={-90} />
      <Arrow x={1226.500} y={696} a={90} c={C} />
      <Arrow x={832} y={448} a={-36} />
      <Arrow x={892} y={423} a={-31} />
      <Arrow x={991} y={532} a={149} />
      <Arrow x={971} y={546} a={-30} c={C} />
      <Arrow x={712} y={535} a={146} c={C} />
      <Arrow x={1436} y={611} a={151} />
      <Arrow x={748.500} y={523} a={-90} />
      <Arrow x={748.500} y={551} a={90} c={Y} />
      <Arrow x={756.500} y={521} a={90} c={Y} />
      <Arrow x={955.500} y={521} a={-90} />
      <Arrow x={956} y={539} a={-90} />
      <Arrow x={405} y={826.500} a={180} />
      <Arrow x={1456} y={826.500} c={Y} />
      <Arrow x={1280} y={698.500} a={180} />

      {([[549, 522], [616, 522], [657, 535], [711, 535], [801, 535], [898, 535], [963, 535], [595, 535], [583, 467], [931, 376], [1279, 430], [1204, 535], [1245, 522], [1312, 522], [1417, 522], [1541, 535], [1617, 535], [405, 697], [583, 697], [931, 697], [1279, 697], [1457, 697]] as const).map(([x, y]) => (
        <rect key={`${x}-${y}`} x={x - 1.5} y={y - 1} width="3" height="3" fill={C} />
      ))}

      {marks.map(([k, x, y]) => (
        <g key={`${x}-${y}`} transform={`translate(${x - 0.5} ${y - 0.5})`}>
          <circle cx="1" cy="1.200" r="9.800" fill="#20303b" fillOpacity=".35" />
          <circle r="9.700" fill="#f6f7f9" />
          <g stroke="#3f4244" strokeWidth="1.500">{glyph[k]}</g>
        </g>
      ))}

      <circle cx="1006" cy="428" r="9.500" fill="#fff" stroke={R} strokeWidth="1.300" />
      <path d="M999.500 421.500l13 13M1012.500 421.500l-13 13" stroke={R} />

      <path d="M1434.500 853V875" stroke="#ff3030" />
      <path d="M1434 875.500H1457" stroke="#30f0ff" />
      <circle cx="1434.500" cy="852.500" r="2.200" fill="#ff3030" />
      <circle cx="1434.500" cy="875" r="3" fill="#30ff30" />
      <rect x="1455" y="873" width="4" height="4" fill="#30f0ff" />
    </svg>
  );
}

function GraphicsToolbar() {
  const lens = (sign: string) => (
    <><path d="M12 12l7 7" stroke="#aaa" strokeWidth="3" /><circle cx="8" cy="8" r="6" fill="#e6f5fb" stroke="#4f9cc0" strokeWidth="1.600" /><path d={sign} stroke="#0e4d75" strokeWidth="2.200" /></>
  );
  const items: React.ReactNode[] = [
    <><path d="M1 1h18v18H1z" fill="#f8f8f8" stroke="#aaa" /><path d="M1 1.500h18" stroke="#999" strokeWidth="2" /><path d="M13 14l5 5" stroke="#999" strokeWidth="3" /><circle cx="10" cy="10" r="5" fill="#eaf6fb" stroke="#4f9cc0" strokeWidth="1.800" /></>,
    lens("M4.500 8h7M8 4.500v7"),
    lens("M4.500 8h7"),
    <><path d="M1 1h18v18H1z" fill="#a9d9ea" stroke="#8aa" /><path d="M1 1.500h18" stroke="#888" strokeWidth="2" /><path d="M1 18.500V12q6 4 10 0L18 5.500V10q-6 8-13 8.500z" fill="#fff" /><path d="M5 19q9-2 14-9v9z" fill="#4d9fc6" /><path d="M7 16L18 5" stroke="#17506f" strokeWidth="2" /></>,
    <><path d="M1 6h13v13H1z" fill="#fff" stroke="#1f6e96" strokeWidth="1.800" /><path d="M1 6l5-5h13l-5 5zM19 1v13l-5 5V6z" fill="#b9e2f2" stroke="#1f6e96" strokeWidth="1.500" /><path d="M19.500 20l.5-1v1z" fill="#444" /></>,
    <><path d="M1 11L7 2l8-1 4 9-6 2z" fill="#9bd7ee" stroke="#5faccb" /><path d="M7 2v9M1 11h12v8H3z" fill="#7fc3dd" stroke="#4f9cc0" /><path d="M12 11h7v8h-7z" fill="#f2f2f2" stroke="#888" /><path d="M15.500 13v4" stroke="#444" strokeDasharray="1 1" /></>,
    <><path d="M1 1h17v16H1z" fill="#f3f3f3" stroke="#999" /><path d="M1 2h17" stroke="#999" strokeWidth="3" /><path d="M1 7h17M1 12h8M6 3v14" stroke="#aaa" /><path d="M8 11h3l1-2h4l1 2h3v8H8z" fill="#3f4244" /><circle cx="14" cy="15" r="2.400" fill="#ccc" /></>,
    <><path d="M1 1l5 5M6 1L1 6M13 0l-3 6M8 9l-2 4M5 15l-2 4M14 15V8M14 15h5M14 15l-5 4M12 10l2-2 2 2M17 13l2 2-2 2" stroke={brown} strokeWidth="1.700" /></>,
    <><path d="M4 6q1-4 6-3M8 0l3 3-3 3" stroke="#444" strokeWidth="1.500" /><path d="M12 1h7v10h-6M12 4h4v4h-4" stroke="#888" strokeWidth="1.300" /><path d="M1 8h6l2 3v4l-5-1z" fill="#c9ebf8" stroke="#2a86ae" /><path d="M6 12h9v7H7z" fill="#4d9fc6" stroke="#2a86ae" /></>,
    <><path d="M1 11l6-9h12v10l-6 7H1z" fill="#a7d7ea" stroke="#9ab" /><path d="M1 13h12v6H1z" fill="#eee" stroke="#aaa" /><path d="M13 13l6-9v8l-6 7z" fill="#cfdfe6" stroke="#9ab" /></>,
    <><path d="M1 6l7-5h11v12l-7 6-11-5z" fill="#a7d7ea" stroke="#6aa9c4" /><path d="M12 7l7-6v12l-7 6z" fill="#7fb9d2" stroke="#5596b5" /><path d="M1 6l11 1M6 9l3 .500v5L6 14z" stroke="#4f8fae" fill="#e3f3f9" /></>,
    <><path d="M2 0v12M17 0v12M3 4h13" stroke="#444" strokeWidth="1.500" /><path d="M7 1v5L3 4zM12 1v5l4-2z" fill="#444" /><path d="M9.500 6v7M6 7h7M6 13h7" stroke={BL} strokeWidth="1.500" /><circle cx="2.500" cy="16" r="2" stroke="#aaa" /><ellipse cx="13" cy="16" rx="5" ry="3" fill="#444" /><circle cx="13" cy="16" r="1.500" fill="#eee" /></>,
    <><path d="M1 1h11v7H1z" fill="#fff8d8" stroke="#c9b98a" /><path d="M12 4.500h7l-6 6M13 6.500v4h4" stroke="#444" strokeWidth="1.500" /><ellipse cx="14" cy="17" rx="5" ry="3" fill="#444" /><circle cx="14" cy="17" r="1.500" fill="#eee" /></>,
    <><path d="M3 4l6 6h8M9 10l-6 6" stroke="#555" strokeWidth="1.500" /><circle cx="4" cy="4" r="2.700" fill="#6bb85c" /><circle cx="17" cy="10" r="2.700" fill="#e0635c" /><circle cx="4" cy="16.500" r="2.700" fill="#3b8dc0" /></>,
  ];
  return (
    <div className="absolute left-[559px] top-[7px] flex h-[38px] w-[454px] items-center border border-[#b4b8ba] bg-[#f8fafd] pl-[2px]">
      {items.map((k, i) => (
        <div key={i} className={i > 11 ? "mx-[1.500px] flex h-[29px] w-[29px] items-center justify-center border border-[#aeb1b3] bg-[#dfe1e3]" : "flex h-[29px] w-[32px] items-center justify-center"}>
          <Svg w={20} h={20}>{k}</Svg>
        </div>
      ))}
    </div>
  );
}

/* ---------- dialog ---------- */

function Dialog() {
  return (
    <div className="absolute left-[296px] top-[70px] flex h-[354px] w-[476px] flex-col border border-[#8d9193] bg-[#eeeff1] p-px text-[#56595b] shadow-[2px_4px_10px_rgba(0,0,0,0.45)]">
      <div className="flex h-[35px] shrink-0 items-center bg-[#d9dddd] pl-[21px] pr-[12px] text-[14px] text-[#2f3234]">
        <span className="flex-1 pt-[2px] text-center tracking-[0.1px]">Unstable section</span>
        <Svg w={11} h={11}><path d="M1.500 1.500l8 8M9.500 1.500l-8 8" stroke="#727678" strokeWidth="2.800" /></Svg>
      </div>
      <div className="flex flex-1 pl-[17px] pt-[21px]">
        <div className="mt-[4px] flex h-[31px] w-[31px] items-center justify-center rounded-full bg-[#3d3e40] text-[24px] font-bold leading-none text-white">?</div>
        <div className="ml-[16px] whitespace-pre text-[14px] leading-[20px] tracking-[0.08px]">
          {"Section has become geometrically unstable.\nAs a result most Sketcher operations will not work.\n\nDo you want the section to be automatically repaired?\n\nChoose 'Yes' to automatically repair the section.\nReferences, constraints and dimensions may be removed\nas a result of this operation.\n\nChoose 'No' to manually repair the section; you will need\nto delete some references, constraints or dimensions."}
        </div>
      </div>
      <div className="flex h-[56px] shrink-0 justify-end gap-[10px] border-t border-[#c6c9cb] pr-[12px] pt-[12px] text-[14px] leading-[30px] text-[#45484a]">
        <div className="h-[30px] w-[77px] border border-[#6cc6f5] bg-[#a1dffe] text-center">Yes</div>
        <div className="h-[30px] w-[77px] border border-[#a9acae] bg-[#f8f8f8] text-center">No</div>
      </div>
    </div>
  );
}

/* ---------- status bar ---------- */

function StatusBar() {
  return (
    <div className="flex h-[57px] border-t border-[#b3b9bb] bg-[#f6fafb] text-[12.500px] text-[#4b4e50]">
      <div className="mt-[21px] flex h-[30px] items-center pl-[7px]">
        <div className="flex h-[30px] w-[26px] items-center justify-center border border-[#aeb1b3] bg-[#dfe1e3]">
          <Svg w={20} h={20}>
            <path d="M1 1h18v18H1z" fill="#f4f4f4" stroke="#aaa" />
            <path d="M1 4h18" stroke="#999" />
            <path d="M1.500 6h5v13h-5z" fill="#cdeaf6" stroke="#2a86ae" strokeWidth="1.500" />
            <ellipse cx="14" cy="16" rx="5" ry="3.500" fill="#444" /><circle cx="14" cy="16" r="1.300" fill="#eee" />
          </Svg>
        </div>
        <Svg w={22} h={22} className="ml-[6px]">
          <circle cx="11" cy="11" r="8" fill="#3f9fd0" />
          <path d="M5 7q4-3 6 0l-3 5-3-1zM12 10l5-2v6l-4 3z" fill="#b6e5f7" />
          <ellipse cx="11" cy="11" rx="12" ry="5" transform="rotate(-50 11 11)" stroke="#777" strokeWidth="1.300" />
        </Svg>
        <Svg w={20} h={20} className="ml-[9px]">
          <path d="M1 1h18v18H1z" fill="#dcebf2" stroke="#2a86ae" strokeWidth="1.600" />
        </Svg>
        <div className="ml-[13px] h-[30px] w-px bg-[#b3b7b9]" />
      </div>
      <div className="ml-[3px] mt-[10px] tracking-[0.05px]">
        <div className="flex h-[20px] items-center gap-[1px] whitespace-nowrap">
          <Svg w={15} h={15}><path d="M1 4.500h6V1l7 6.500L7 14v-3.500H1z" fill="#3a9bcb" stroke="#1c6288" /></Svg>
          Select the axis of revolution. You can select a straight curve, edge, axis, or axis of a coordinate system.
        </div>
        <div className="flex h-[20px] items-center gap-[1px] whitespace-nowrap tracking-[-0.01px]">
          <Svg w={15} h={15}><path d="M1 1h3v13H1zM14 1h-3L6 7l5 7h3z" fill="#bfe5f3" stroke="#1c6e96" /><path d="M9 1L4 6l2 8" stroke="#1c6e96" strokeWidth="1.500" /></Svg>
          Section has become geometrically unstable. Try to define different set of dimensions and constraints.
        </div>
      </div>
      <div className="ml-auto mt-[19px] flex h-[33px] items-center">
        <div className="h-[33px] w-[6px] border-x border-[#b3b7b9]" />
        <div className="ml-[2px] flex h-[31px] w-[51px] border border-[#b9bcbe] bg-[#f8f8f8]">
          <div className="flex w-[33px] items-center justify-center">
            <Svg w={20} h={20}>
              <path d="M4 0h4v3h4V0h4v4q4 3 4 10v5h-5q-5-6-10 0H0v-5Q0 7 4 4z" fill="#9da0a2" />
              <path d="M9 4h2v10H9z" fill="#777" />
            </Svg>
          </div>
          <div className="flex flex-1 items-center justify-center border-l border-[#c6c9cb] bg-[#dfe1e3]"><Caret color="#a5a8aa" /></div>
        </div>
        <div className="ml-[2px] h-[33px] w-px bg-[#b3b7b9]" />
      </div>
      <div className="ml-[119px] mt-[22px] flex h-[28px] w-[217px] border border-[#aeb1b3] bg-[#f7f8f8]">
        <div className="flex-1" />
        <div className="flex w-[20px] items-center justify-center border-l border-[#aeb1b3]"><Caret color="#555" /></div>
      </div>
      <div className="flex w-[20px] items-end justify-end pb-[4px] pr-[3px]">
        <Svg w={13} h={13}><path d="M0 13L13 0M5 13l8-8M10 13l3-3" stroke="#b3b7b9" strokeWidth="1.500" /></Svg>
      </div>
    </div>
  );
}

/* ---------- taskbar ---------- */

function Taskbar() {
  return (
    <div className="flex h-[49px] items-center border-t border-[#3f5057] bg-gradient-to-r from-[#21353e] via-[#20323f] to-[#1c2840] text-white">
      <Svg w={20} h={20} className="ml-[20px]">
        <path d="M0 3l9-1.300V9.500H0zM10 1.500L20 0v9.500H10zM0 10.500h9v7.800L0 17zM10 10.500h10V20l-10-1.500z" fill="#fff" />
      </Svg>
      <Svg w={21} h={20} className="ml-[40px]">
        <path d="M1 0v3.500h12V0M1 20v-3.500h12V20M1 6h12v8H1zM18.500 0v6M18.500 12v8" stroke="#fff" strokeWidth="1.300" />
        <path d="M17 7h3v3h-3z" fill="#fff" />
      </Svg>
      <Svg w={28} h={24} className="ml-[39px]">
        <path d="M0 1h11l2 3H0z" fill="#e0a010" />
        <path d="M0 4h28v18H0z" fill="#fcd565" />
        <path d="M0 3q8 3 13 0h15v3H0z" fill="#f5c542" />
        <path d="M5 24V13q0-1 2-1h14q2 0 2 1v11h-5v-6h-8v6z" fill="#3a93dd" />
      </Svg>
      <Svg w={28} h={28} className="ml-[34px]">
        <defs>
          <linearGradient id="fox" x1="1" y1="0" x2=".2" y2="1">
            <stop offset="0" stopColor="#fff13d" /><stop offset=".45" stopColor="#ff8a1e" /><stop offset="1" stopColor="#f0206c" />
          </linearGradient>
        </defs>
        <path d="M14 28C5 28 0 22 0 15c0-4 1-7 3-9l1 2 3-3 1 3h4c2-1 3-4 6-8 0 4 3 4 5 7 1 0 2 0 2 2 2 2 3 4 3 7 0 8-6 12-14 12z" fill="url(#fox)" />
        <circle cx="14" cy="15" r="6.500" fill="#6a3fe0" />
        <path d="M4 12q5-5 11-1-5 1-5 4 3 6 9 3-2 6-8 5-7-3-7-11z" fill="#ff7a1a" />
      </Svg>
      <Svg w={30} h={30} className="ml-[33px]">
        <path d="M0 0h21q8 2 9 11v19H0z" fill="#ffc60f" />
        <path d="M8 6.500v15L21.500 14z" fill="#fff" stroke="#fff" strokeWidth="2" strokeLinejoin="round" />
        <path d="M10 14.500h6M13 11.500v6" stroke="#ffc60f" strokeWidth="1.800" />
        <text x="19" y="28" fontSize="8" fill="#fff" fontFamily="Open Sans">22</text>
      </Svg>
      <div className="ml-[17px] flex h-[48px] w-[61px] border-b border-[#76b9ed]">
        <div className="flex w-[56px] items-center justify-center bg-[#4b6067] pl-[4px]">
          <Svg w={30} h={30}>
            <path d="M.5.500h29v29H.5z" fill="#fff" stroke="#9aa" />
            <path d="M4 4h21v21l-2 2H4z" fill="#d6d6d2" stroke="#8a8d8f" />
            <path d="M11 4.500h14v14H11z" fill="#009de0" />
          </Svg>
        </div>
        <div className="w-[5px] border-l border-[#20323f] bg-[#3c5058]" />
      </div>
      <div className="ml-auto flex h-full items-center">
        <Svg w={16} h={9}><path d="M0 8.500L8 1l8 7.500" stroke="#fff" strokeWidth="1.300" /></Svg>
        <Svg w={16} h={20} className="ml-[15px]">
          <rect x="1.500" y="5" width="9" height="10" rx="2" stroke="#fff" strokeWidth="1.300" />
          <path d="M10.500 9l4-2v6l-4-2M2 2q4-2 9 0M2 18q4 2 9 0" stroke="#fff" strokeWidth="1.300" />
        </Svg>
        <Svg w={13} h={20} className="ml-[14px]">
          <rect x="2.500" width="8" height="15" rx="1" fill="#fff" />
          <path d="M.7 9v3q0 4 5.800 4t5.800-4V9M6.500 16v3M3 19.300h7" stroke="#fff" strokeWidth="1.300" />
        </Svg>
        <Svg w={21} h={15} className="ml-[14px]">
          <path d="M7.500 3.500h11v10h-13v-6M19.500 6.500v4" stroke="#fff" strokeWidth="1.300" />
          <path d="M8 5h9.500v7H8zM0 3h6v3L3 8 0 6zM1 0h1v3H1zM4 0h1v3H4z" fill="#fff" />
        </Svg>
        <Svg w={16} h={16} className="ml-[12px]">
          <path d="M1 16Q1 2 15 1M4.500 16Q5 6 15 5M8 16q1-6 7-7" stroke="#b9c0ca" strokeWidth="1.200" />
          <circle cx="13.500" cy="14" r="1.800" fill="#fff" />
        </Svg>
        <Svg w={19} h={14} className="ml-[11px]">
          <path d="M.7 4.500h3l4-4v13l-4-4h-3zM11 3.500l7 7M18 3.500l-7 7" stroke="#fff" strokeWidth="1.200" />
        </Svg>
        <div className="ml-[13px] w-[77px] pt-[1px] text-center text-[14px] leading-[23px] tracking-[-0.15px]">
          15:10:38
          <br />
          15/01/2023
        </div>
        <Svg w={21} h={20} className="ml-[23px]">
          <path d="M.7.700h19.500v15.500H13l-2.500 3-2.500-3H.7z" stroke="#fff" strokeWidth="1.300" />
        </Svg>
        <div className="ml-[23px] h-full w-px bg-[#6b7380]" />
        <div className="w-[3px]" />
      </div>
    </div>
  );
}

export default function App() {
  return (
    <div className="relative h-[1078px] w-[1917px] overflow-hidden bg-[#b7bcbe] [font-family:'Open_Sans','Noto_Sans',sans-serif]">
      <div className="flex h-[5px]">
        <div className="ml-[809px] h-px w-[60px] bg-[#0f7ad4]" />
        <div className="h-px w-[241px] bg-[#26221f]" />
      </div>
      <div className="ml-[5px] w-[1909px]">
        <TitleBar />
        <TabBar />
        <Ribbon />
        <div className="flex h-[758px]">
          <ModelTree />
          <div className="relative">
            <Canvas />
            <GraphicsToolbar />
          </div>
        </div>
        <StatusBar />
      </div>
      <div className="h-[4px]" />
      <Taskbar />
      <Dialog />
    </div>
  );
}
